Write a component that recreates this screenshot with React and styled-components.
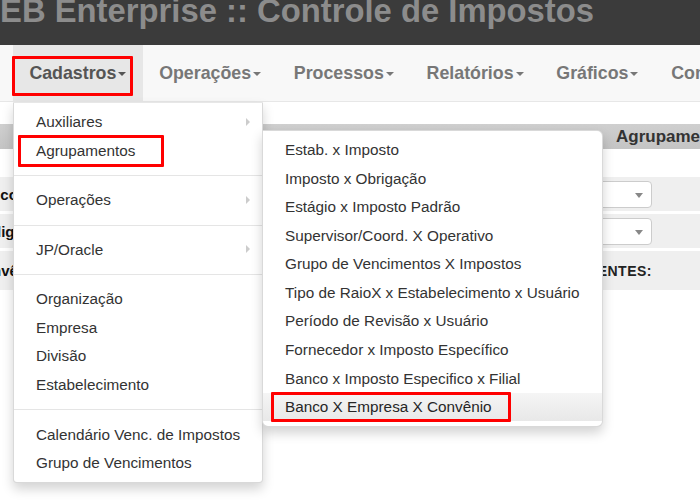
import React from 'react'
import styled, { createGlobalStyle, css } from 'styled-components'

const GlobalStyle = createGlobalStyle`
	html, body {
		margin: 0;
		padding: 0;
		background: #fff;
		overflow: hidden;
	}
	body {
		font-family: 'Liberation Sans', Arial, sans-serif;
		width: 700px;
		height: 501px;
	}
`

const navItems = ['Cadastros', 'Operações', 'Processos', 'Relatórios', 'Gráficos', 'Configurações']

const mainMenu = [
	{ label: 'Auxiliares', sub: true },
	{ label: 'Agrupamentos', open: true, marked: true },
	'divider',
	{ label: 'Operações', sub: true },
	'divider',
	{ label: 'JP/Oracle', sub: true },
	'divider',
	{ label: 'Organização' },
	{ label: 'Empresa' },
	{ label: 'Divisão' },
	{ label: 'Estabelecimento' },
	'divider',
	{ label: 'Calendário Venc. de Impostos' },
	{ label: 'Grupo de Vencimentos' },
]

const subMenu = [
	'Estab. x Imposto',
	'Imposto x Obrigação',
	'Estágio x Imposto Padrão',
	'Supervisor/Coord. X Operativo',
	'Grupo de Vencimentos X Impostos',
	'Tipo de RaioX x Estabelecimento x Usuário',
	'Período de Revisão x Usuário',
	'Fornecedor x Imposto Específico',
	'Banco x Imposto Especifico x Filial',
	'Banco X Empresa X Convênio',
]

const App = () => {
	return (
		<>
			<GlobalStyle />
			<Header>
				<Title>EB Enterprise :: Controle de Impostos</Title>
			</Header>
			<Navbar>
				{navItems.map((item, i) => (
					<NavItem key={item} $active={i === 0}>
						{item}
						<Caret />
						{i === 0 && (
							<>
								<Highlight $left={-1} $top={11} $w={121} $h={40} />
								<Menu>
									{mainMenu.map((entry, j) =>
										entry === 'divider' ? (
											<Divider key={j} />
										) : (
											<MenuItem key={j} $sub={entry.sub}>
												{entry.label}
												{entry.marked && <Highlight $left={4} $top={-1.6} $w={146} $h={32} />}
												{entry.open && (
													<SubMenu>
														{subMenu.map((s, k) => (
															<MenuItem key={s} $hover={k === subMenu.length - 1}>
																{s}
																{k === subMenu.length - 1 && (
																	<Highlight $left={8} $top={-1} $w={240} $h={30} />
																)}
															</MenuItem>
														))}
													</SubMenu>
												)}
											</MenuItem>
										)
									)}
								</Menu>
							</>
						)}
					</NavItem>
				))}
			</Navbar>
			<Content>
				<PanelHeading>Agrupamento Banco X Empresa X Convênio</PanelHeading>
				<Form>
					<Row>
						<Label>Banco:</Label>
						<Select />
					</Row>
					<Row>
						<Label>Código:</Label>
						<Select />
					</Row>
					<Row $tall>
						<Label>Convênio:</Label>
						<RowText>CONVÊNIOS VIGENTES:</RowText>
					</Row>
				</Form>
			</Content>
		</>
	)
}

const Header = styled.div`
	height: 45px;
	background: #3b3b3b;
	overflow: hidden;
`

const Title = styled.h1`
	margin: -6px 0 0 0;
	font-size: 32.8px;
	line-height: 33px;
	font-weight: bold;
	color: #8c8c8c;
	white-space: nowrap;
`

const Navbar = styled.nav`
	display: flex;
	height: 56px;
	padding-left: 13px;
	background: #f8f8f8;
	border-bottom: 1px solid #e7e7e7;
	position: relative;
	z-index: 10;
`

const NavItem = styled.div`
	position: relative;
	display: flex;
	align-items: center;
	padding: 0 16.4px;
	font-size: 17.8px;
	font-weight: bold;
	color: #777;
	white-space: nowrap;
	${({ $active }) =>
		$active &&
		css`
			background: #e7e7e7;
			color: #555;
		`}
`

const Caret = styled.span`
	display: inline-block;
	width: 0;
	height: 0;
	margin-left: 2px;
	margin-top: 2px;
	border-top: 4.4px solid currentColor;
	border-left: 4.4px solid transparent;
	border-right: 4.4px solid transparent;
`

const Highlight = styled.span`
	position: absolute;
	left: ${({ $left }) => $left}px;
	top: ${({ $top }) => $top}px;
	width: ${({ $w }) => $w}px;
	height: ${({ $h }) => $h}px;
	box-sizing: border-box;
	border: 3px solid #ff0000;
	border-radius: 1px;
	pointer-events: none;
	z-index: 5;
`

const Menu = styled.div`
	position: absolute;
	top: calc(100% + 1px);
	left: 0;
	width: 250px;
	box-sizing: border-box;
	padding: 5px 0;
	background: #fff;
	border: 1px solid rgba(0, 0, 0, 0.15);
	border-top-color: #e7e7e7;
	border-radius: 0 0 4px 4px;
	box-shadow: 0 6px 12px rgba(0, 0, 0, 0.175);
	font-weight: normal;
	cursor: default;
`

const SubMenu = styled(Menu)`
	top: -6.5px;
	left: 100%;
	width: 341px;
	border-top-color: rgba(0, 0, 0, 0.15);
	border-radius: 0 6px 6px 6px;
`

const MenuItem = styled.div`
	position: relative;
	padding: 3.28px 22px;
	line-height: 22px;
	font-size: 15.3px;
	color: #333;
	white-space: nowrap;
	${({ $sub }) =>
		$sub &&
		css`
			&::after {
				content: '';
				position: absolute;
				right: 12px;
				top: 50%;
				margin-top: -4.5px;
				border-style: solid;
				border-width: 4.5px 0 4.5px 4.5px;
				border-color: transparent transparent transparent #ccc;
			}
		`}
	${({ $hover }) =>
		$hover &&
		css`
			background: linear-gradient(#f5f5f5, #e8e8e8);
			color: #262626;
		`}
`

const Divider = styled.div`
	height: 1px;
	margin: 10px 0;
	background: #e5e5e5;
`

const Content = styled.main`
	margin-left: -28px;
	padding-top: 22px;
`

const PanelHeading = styled.div`
	height: 25px;
	line-height: 25px;
	padding-left: 644px;
	background: linear-gradient(#cfcfcf, #c4c4c4);
	font-size: 17px;
	font-weight: bold;
	color: #333;
	white-space: nowrap;
	overflow: hidden;
`

const Form = styled.div`
	display: flex;
	flex-direction: column;
	gap: 3px;
	margin-top: 28px;
`

const Row = styled.div`
	display: flex;
	align-items: center;
	height: ${({ $tall }) => ($tall ? 39 : 34)}px;
	padding-right: 48px;
	background: #efefef;
`

const Label = styled.div`
	width: 160px;
	font-size: 15px;
	font-weight: bold;
	color: #111;
	white-space: nowrap;
`

const Select = styled.div`
	position: relative;
	margin-left: auto;
	width: 260px;
	height: 27px;
	box-sizing: border-box;
	background: #fff;
	border: 1px solid #ccc;
	border-radius: 4px;

	&::after {
		content: '';
		position: absolute;
		right: 8px;
		top: 11px;
		border-top: 5px solid #888;
		border-left: 4px solid transparent;
		border-right: 4px solid transparent;
	}
`

const RowText = styled.div`
	margin-left: auto;
	font-size: 14px;
	font-weight: bold;
	letter-spacing: 0.5px;
	color: #222;
`

export default App
